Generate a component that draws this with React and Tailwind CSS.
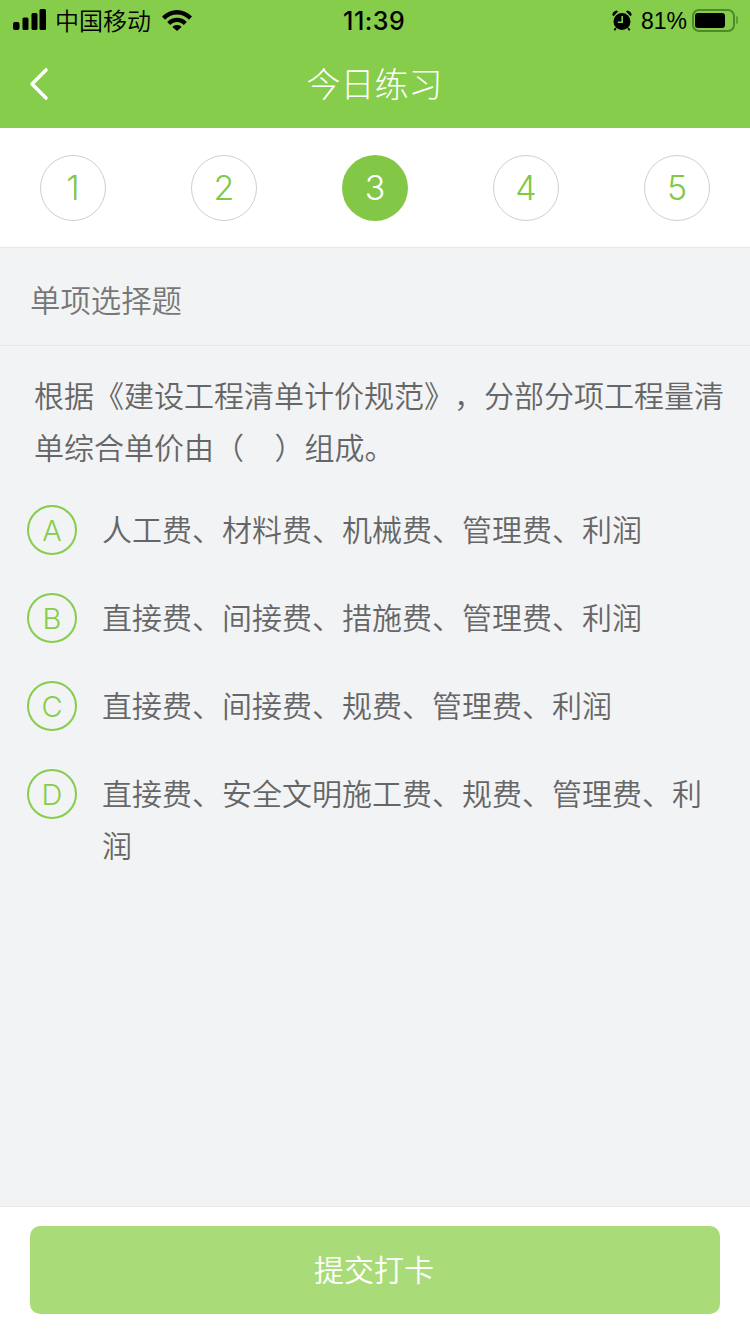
const cjk = { fontFamily: '"Noto Sans CJK SC", "Liberation Sans", sans-serif' };
const latin = { fontFamily: 'Inter, "Liberation Sans", sans-serif' };

function Signal() {
  return (
    <svg width="33" height="22" viewBox="0 0 33 22" fill="#000">
      <rect x="0" y="13" width="6.5" height="8" rx="2" />
      <rect x="9.5" y="8.5" width="6" height="12.5" rx="1.5" />
      <rect x="18.5" y="4" width="6" height="17" rx="1.5" />
      <rect x="26.5" y="0" width="6.5" height="21" rx="1.5" />
    </svg>
  );
}

function Wifi() {
  return (
    <svg width="30" height="22" viewBox="0 0 30 22" fill="#000">
      <path d="M0 7.6C8.3 -1.2 21.7 -1.2 30 7.6L27 10.8C20.4 3.9 9.6 3.9 3 10.8Z" />
      <path d="M5.2 13C10.6 7.4 19.4 7.4 24.8 13L21.8 16C17.9 12 12.1 12 8.2 16Z" />
      <path d="M10.4 18C13 15.4 17 15.4 19.6 18L15 22Z" />
    </svg>
  );
}

function Alarm() {
  return (
    <svg width="20" height="21" viewBox="0 0 20 21" fill="#000">
      <circle cx="10" cy="11.5" r="8.5" />
      <path d="M0.3 5C0.5 2.4 2.3 0.6 4.8 0.4L6 1.6L1.6 6.2Z" />
      <path d="M19.7 5C19.5 2.4 17.7 0.6 15.2 0.4L14 1.6L18.4 6.2Z" />
      <path d="M3.8 18L2.4 20.4M16.2 18L17.6 20.4" stroke="#000" strokeWidth="1.8" />
      <path d="M10.2 6V12.2H5.8" fill="none" stroke="#86cd4b" strokeWidth="1.6" />
    </svg>
  );
}

function Battery() {
  return (
    <div className="flex items-center">
      <div className="w-[43px] h-[23px] rounded-[7px] border-2 border-[#4d8a2a] pl-[1px] py-[2px]">
        <div className="w-[30px] h-full rounded-[3px] bg-black" />
      </div>
      <div className="w-[2px] h-[8px] ml-[1px] rounded-r bg-[#5f9e35]" />
    </div>
  );
}

function Step({ n, active }) {
  return (
    <div
      className={
        active
          ? "w-[66px] h-[66px] rounded-full bg-[#82c846] text-white flex items-center justify-center text-[34px] font-light"
          : "w-[66px] h-[66px] rounded-full border border-[#cfcfcf] text-[#82c846] flex items-center justify-center text-[34px] font-light"
      }
      style={latin}
    >
      {n}
    </div>
  );
}

function Option({ letter, children }) {
  return (
    <div className="flex items-start pl-[27px] pr-[40px] mb-[35px]">
      <div
        className="w-[50px] h-[50px] mt-[3px] shrink-0 rounded-full border-2 border-[#86cd4b] text-[#86cd4b] flex items-center justify-center text-[29px] font-light pt-[2px]"
        style={latin}
      >
        {letter}
      </div>
      <div className="ml-[25px] text-[30px] leading-[52px] text-[#666666] font-[350]">{children}</div>
    </div>
  );
}

export default function App() {
  return (
    <div className="w-[750px] h-[1334px] flex flex-col bg-[#f2f3f5] overflow-hidden [text-spacing-trim:space-all]" style={cjk}>
      <div className="bg-[#86cd4b] h-[128px] shrink-0 flex flex-col">
        <div className="h-[40px] pl-[13px] pr-[12px] flex items-center justify-between relative">
          <div className="flex items-center">
            <Signal />
            <span className="ml-[9px] text-[24px] leading-[40px] text-black font-[350]">中国移动</span>
            <span className="ml-[11px] flex"><Wifi /></span>
          </div>
          <span
            className="absolute left-[343px] top-[1px] text-[25px] tracking-[0.5px] leading-[40px] font-medium text-black"
            style={latin}
          >
            11:39
          </span>
          <div className="flex items-center">
            <Alarm />
            <span
              className="ml-[9px] pt-[1px] text-[23px] leading-[40px] text-black font-normal"
              style={{ fontFamily: '"Liberation Sans", sans-serif' }}
            >
              81%
            </span>
            <span className="ml-[5px] flex"><Battery /></span>
          </div>
        </div>
        <div className="flex-1 relative flex items-center justify-center">
          <svg className="absolute left-[28px] top-[27px]" width="22" height="34" viewBox="0 0 22 34" fill="none" stroke="#fff" strokeWidth="3.6" strokeLinecap="round" strokeLinejoin="round">
            <path d="M18 3L4 17L18 31" />
          </svg>
          <span className="text-[34px] leading-[44px] text-white font-light -mt-[3px] -ml-[1px]">今日练习</span>
        </div>
      </div>

      <div className="h-[120px] shrink-0 bg-white border-b border-[#e8e8e8] px-[40px] flex items-center justify-between">
        <Step n={1} />
        <Step n={2} />
        <Step n={3} active />
        <Step n={4} />
        <Step n={5} />
      </div>

      <div className="h-[98px] shrink-0 border-b border-[#e6e6e6] pl-[30px] pt-[7px] flex items-center text-[30.4px] text-[#777777] font-[350]">
        单项选择题
      </div>

      <div className="flex-1">
        <div className="pl-[34px] pr-[20px] pt-[22px] text-[30px] leading-[52px] text-[#666666] font-[350] mb-[30px]">
          根据《建设工程清单计价规范》，分部分项工程量清单综合单价由（&nbsp;&nbsp;&nbsp;&nbsp;&#8202;&#8202;）组成。
        </div>
        <Option letter="A">人工费、材料费、机械费、管理费、利润</Option>
        <Option letter="B">直接费、间接费、措施费、管理费、利润</Option>
        <Option letter="C">直接费、间接费、规费、管理费、利润</Option>
        <Option letter="D">直接费、安全文明施工费、规费、管理费、利润</Option>
      </div>

      <div className="h-[128px] shrink-0 bg-white border-t border-[#e8e8e8] px-[30px] pt-[19px]">
        <div className="h-[88px] rounded-[10px] bg-[#a9dc79] text-white text-[30px] font-[350] flex items-center justify-center pb-[4px] pr-[2px]">
          提交打卡
        </div>
      </div>
    </div>
  );
}
